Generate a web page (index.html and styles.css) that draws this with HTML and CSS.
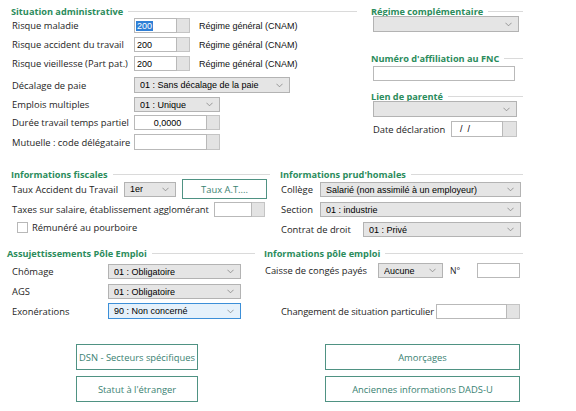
FILE: index.html
```html
<!DOCTYPE html>
<html lang="fr">
<head>
<meta charset="utf-8">
<title>Situation administrative</title>
<link rel="stylesheet" href="styles.css">
</head>
<body>
<div class="page">
  <div class="band band1">
    <section class="col c1l">
      <div class="hd"><span>Situation administrative</span><i></i></div>
      <div class="row h15 mt0"><span class="lab w122">Risque maladie</span><span class="inp w43"><span class="hl">200</span></span><span class="dots"></span><span class="val">Régime général (CNAM)</span></div>
      <div class="row h15 mt4"><span class="lab w122">Risque accident du travail</span><span class="inp w43">200</span><span class="dots"></span><span class="val">Régime général (CNAM)</span></div>
      <div class="row h15 mt4"><span class="lab w122">Risque vieillesse (Part pat.)</span><span class="inp w43">200</span><span class="dots"></span><span class="val">Régime général (CNAM)</span></div>
      <div class="row h16 mt6"><span class="lab w122">Décalage de paie</span><span class="cmb w156"><span class="ct">01 : Sans décalage de la paie</span><svg class="chev" viewBox="0 0 8 5"><polyline points="0.5,0.5 4,4 7.5,0.5"/></svg></span></div>
      <div class="row h15 mt4"><span class="lab w122">Emplois multiples</span><span class="cmb w86"><span class="ct">01 : Unique</span><svg class="chev" viewBox="0 0 8 5"><polyline points="0.5,0.5 4,4 7.5,0.5"/></svg></span></div>
      <div class="row h15 mt3"><span class="lab w122">Durée travail temps partiel</span><span class="inp w73 center">0,0000</span><span class="dots"></span></div>
      <div class="row h16 mt4"><span class="lab w122">Mutuelle : code délégataire</span><span class="inp w73"></span><span class="dots"></span></div>
    </section>
    <section class="col c1r">
      <div class="hd"><span>Régime complémentaire</span><i></i></div>
      <div class="row h16 mtm2 ind2"><span class="cmb w146"><span class="ct"></span><svg class="chev" viewBox="0 0 8 5"><polyline points="0.5,0.5 4,4 7.5,0.5"/></svg></span></div>
      <div class="hd mt20"><span>Numéro d'affiliation au FNC</span><i></i></div>
      <div class="row h15 mt1 ind2"><span class="inp w142"></span></div>
      <div class="hd mt9"><span>Lien de parenté</span><i></i></div>
      <div class="row h16 mtm2 ind2"><span class="cmb w144"><span class="ct"></span><svg class="chev" viewBox="0 0 8 5"><polyline points="0.5,0.5 4,4 7.5,0.5"/></svg></span></div>
      <div class="row h16 mt4 ind2"><span class="lab w78">Date déclaration</span><span class="inp w52 pad8">/ &nbsp;/</span><span class="dots w14"></span></div>
    </section>
  </div>

  <div class="band band2">
    <section class="col c2l">
      <div class="hd"><span>Informations fiscales</span><i></i></div>
      <div class="row h20 mtm2"><span class="lab w112">Taux Accident du Travail</span><span class="cmb w52 h15"><span class="ct">1er</span><svg class="chev" viewBox="0 0 8 5"><polyline points="0.5,0.5 4,4 7.5,0.5"/></svg></span><button class="btn btn-at" type="button">Taux A.T....</button></div>
      <div class="row h15 mt3"><span class="lab w202">Taxes sur salaire, établissement agglomérant</span><span class="inp w38"></span><span class="dots"></span></div>
      <div class="row h11 mt5 ind4"><span class="chk"></span><span class="lab">Rémunéré au pourboire</span></div>
    </section>
    <section class="col c2r">
      <div class="hd"><span>Informations prud'homales</span><i></i></div>
      <div class="row h15 mt1"><span class="lab w39">Collège</span><span class="cmb w201"><span class="ct">Salarié (non assimilé à un employeur)</span><svg class="chev" viewBox="0 0 8 5"><polyline points="0.5,0.5 4,4 7.5,0.5"/></svg></span></div>
      <div class="row h15 mt5"><span class="lab w39">Section</span><span class="cmb w201"><span class="ct">01 : industrie</span><svg class="chev" viewBox="0 0 8 5"><polyline points="0.5,0.5 4,4 7.5,0.5"/></svg></span></div>
      <div class="row h15 mt5"><span class="lab w82">Contrat de droit</span><span class="cmb w158"><span class="ct">01 : Privé</span><svg class="chev" viewBox="0 0 8 5"><polyline points="0.5,0.5 4,4 7.5,0.5"/></svg></span></div>
    </section>
  </div>

  <div class="band band3">
    <section class="col c3l">
      <div class="hd"><span>Assujettissements Pôle Emploi</span><i></i></div>
      <div class="row h15 mt4 ind5"><span class="lab w96">Chômage</span><span class="cmb w133"><span class="ct">01 : Obligatoire</span><svg class="chev" viewBox="0 0 8 5"><polyline points="0.5,0.5 4,4 7.5,0.5"/></svg></span></div>
      <div class="row h15 mt5 ind5"><span class="lab w96">AGS</span><span class="cmb w133"><span class="ct">01 : Obligatoire</span><svg class="chev" viewBox="0 0 8 5"><polyline points="0.5,0.5 4,4 7.5,0.5"/></svg></span></div>
      <div class="row h16 mt4 ind5"><span class="lab w96">Exonérations</span><span class="cmb w133 focus"><span class="ct">90 : Non concerné</span><svg class="chev" viewBox="0 0 8 5"><polyline points="0.5,0.5 4,4 7.5,0.5"/></svg></span></div>
    </section>
    <section class="col c3r">
      <div class="hd"><span>Informations pôle emploi</span><i></i></div>
      <div class="row h15 mt3 ind1"><span class="lab w113">Caisse de congés payés</span><span class="cmb w65"><span class="ct">Aucune</span><svg class="chev" viewBox="0 0 8 5"><polyline points="0.5,0.5 4,4 7.5,0.5"/></svg></span><span class="lab num">N°</span><span class="inp w43"></span></div>
      <div class="row h15 mt26 ind18"><span class="lab w154 tight">Changement de situation particulier</span><span class="inp w71"></span><span class="dots"></span></div>
    </section>
  </div>

  <div class="band band4">
    <div class="btncol bl">
      <button class="btn big" type="button">DSN - Secteurs spécifiques</button>
      <button class="btn big" type="button">Statut à l'étranger</button>
    </div>
    <div class="btncol br">
      <button class="btn big" type="button">Amorçages</button>
      <button class="btn big" type="button">Anciennes informations DADS-U</button>
    </div>
  </div>
</div>
</body>
</html>
```

FILE: styles.css
```css
* { box-sizing: border-box; }
html, body { margin: 0; padding: 0; background: #ffffff; }
body {
  width: 576px;
  height: 411px;
  overflow: hidden;
  font-family: "Open Sans", "Noto Sans", sans-serif;
  font-size: 9.4px;
  color: #1e1e1e;
}
.page { padding-top: 5px; }

.band { display: flex; }
.band2 { margin-top: 18px; }
.band3 { margin-top: 10px; }
.band4 { margin-top: 25px; }

.col { display: flex; flex-direction: column; }
.c1l { margin-left: 11px; width: 346px; }
.c1r { margin-left: 14px; width: 152px; }
.c2l { margin-left: 11px; width: 259px; }
.c2r { margin-left: 10px; width: 243px; }
.c3l { margin-left: 7px; width: 248px; }
.c3r { margin-left: 9px; width: 259px; }

.hd {
  display: flex;
  align-items: center;
  height: 13px;
  font-weight: 700;
  font-size: 9.2px;
  color: #2b8c5c;
  white-space: nowrap;
}
.hd i {
  flex: 1;
  height: 1px;
  background: #dadada;
  margin-left: 5px;
  margin-top: -1px;
}

.row { display: flex; align-items: center; margin-left: 1px; }
.h11 { height: 11px; }
.h15 { height: 15px; }
.h16 { height: 16px; }
.h20 { height: 20px; }
.mt0 { margin-top: 0; }
.mt1 { margin-top: 1px; }
.mt3 { margin-top: 3px; }
.mt4 { margin-top: 4px; }
.mt5 { margin-top: 5px; }
.mt6 { margin-top: 6px; }
.mt9 { margin-top: 9px; }
.mt20 { margin-top: 20px; }
.mt26 { margin-top: 26px; }
.mtm2 { margin-top: -2px; }
.ind1 { margin-left: 1px; }
.ind2 { margin-left: 2px; }
.ind4 { margin-left: 4px; }
.ind5 { margin-left: 5px; }
.ind18 { margin-left: 17px; }

.lab { white-space: nowrap; flex: none; }
.tight { letter-spacing: -0.12px; }
.w39 { width: 39px; }
.w78 { width: 78px; }
.w82 { width: 82px; }
.w96 { width: 96px; }
.w112 { width: 112px; }
.w113 { width: 113px; }
.w122 { width: 122px; }
.w154 { width: 155px; }
.w202 { width: 202px; }
.num { margin-left: 7px; width: 27px; font-size: 8.6px; }

.inp, .cmb {
  flex: none;
  height: 100%;
  display: flex;
  align-items: center;
  font-family: "Liberation Sans", Arial, sans-serif;
  font-size: 9px;
  color: #000;
  white-space: nowrap;
}
.inp {
  background: #ffffff;
  border: 1px solid #b9b9b9;
  padding-left: 2px;
}
.inp.center { justify-content: center; padding-left: 0; padding-right: 6px; }
.inp.pad8 { padding-left: 8px; }
.hl { background: #2f7fd6; color: #fff; padding: 0 1px; margin-left: -1px; }

.dots {
  flex: none;
  width: 13px;
  height: 100%;
  background: #e3e3e3;
  border: 1px solid #c4c4c4;
  border-left: none;
}
.dots.w14 { width: 14px; }

.val {
  margin-left: 9px;
  font-family: "Liberation Sans", Arial, sans-serif;
  font-size: 9px;
  color: #111;
  white-space: nowrap;
}

.cmb {
  background: #e5e5e5;
  border: 1px solid #b3b3b3;
  padding-left: 5px;
  padding-right: 6px;
  justify-content: space-between;
}
.cmb.h15 { height: 15px; }
.cmb.focus { background: #e5f1fb; border-color: #3c8fd8; }
.ct { overflow: hidden; }
.chev { width: 7px; height: 5px; flex: none; }
.chev polyline { fill: none; stroke: #7a7a7a; stroke-width: 0.8; }

.w38 { width: 38px; }
.w43 { width: 43px; }
.w52 { width: 52px; }
.w65 { width: 65px; }
.w71 { width: 71px; }
.w73 { width: 73px; }
.w86 { width: 86px; }
.w133 { width: 133px; }
.w142 { width: 142px; }
.w144 { width: 144px; }
.w146 { width: 146px; }
.w156 { width: 156px; }
.w158 { width: 158px; }
.w201 { width: 201px; }

.chk {
  width: 11px;
  height: 11px;
  border: 1px solid #b8b8b8;
  background: #fff;
  margin-left: 2px;
  margin-right: 4px;
  flex: none;
}

.btn {
  font-family: "Open Sans", "Noto Sans", sans-serif;
  font-size: 9.4px;
  color: #3a8272;
  background: #ffffff;
  border: 1px solid #4f9283;
  padding: 0;
  margin: 0;
  white-space: nowrap;
}
.btn-at { width: 85px; height: 20px; margin-left: 6px; }

.btncol { display: flex; flex-direction: column; gap: 6px; }
.bl { margin-left: 76px; width: 122px; }
.br { margin-left: 127px; width: 195px; }
.big { height: 26px; width: 100%; }
```
